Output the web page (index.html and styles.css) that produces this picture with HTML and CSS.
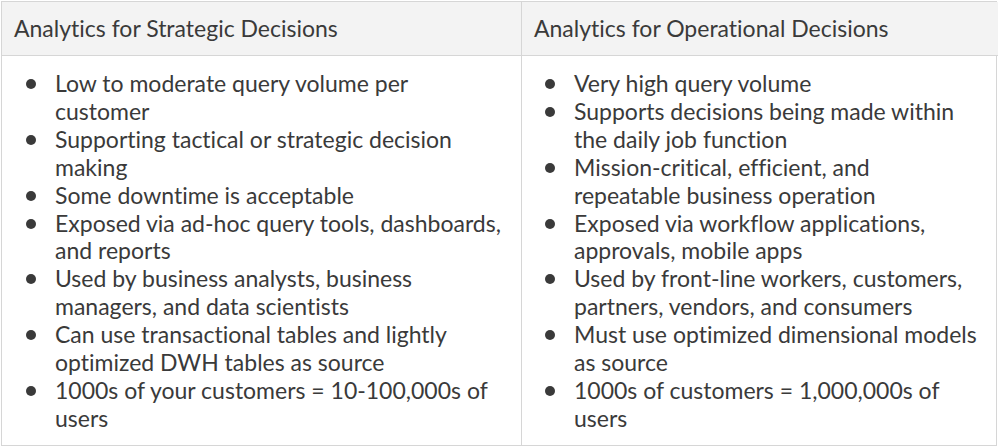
FILE: index.html
```html
<!DOCTYPE html>
<html>
<head>
<meta charset="utf-8">
<link rel="stylesheet" href="styles.css">
</head>
<body>
<div class="table">
  <div class="head">Analytics for Strategic Decisions</div>
  <div class="head right">Analytics for Operational Decisions</div>
  <div class="cell">
    <ul class="list">
      <li>Low to moderate query volume per customer</li>
      <li>Supporting tactical or strategic decision making</li>
      <li>Some downtime is acceptable</li>
      <li>Exposed via ad-hoc query tools, dashboards, and reports</li>
      <li>Used by business analysts, business managers, and data scientists</li>
      <li>Can use transactional tables and lightly optimized DWH tables as source</li>
      <li>1000s of your customers = 10-100,000s of users</li>
    </ul>
  </div>
  <div class="cell right">
    <ul class="list">
      <li>Very high query volume</li>
      <li>Supports decisions being made within the daily job function</li>
      <li>Mission-critical, efficient, and repeatable business operation</li>
      <li>Exposed via workflow applications, approvals, mobile apps</li>
      <li>Used by front-line workers, customers, partners, vendors, and consumers</li>
      <li>Must use optimized dimensional models as source</li>
      <li>1000s of customers = 1,000,000s of users</li>
    </ul>
  </div>
</div>
</body>
</html>
```

FILE: styles.css
```css
html, body {
  margin: 0;
  padding: 0;
  background: #ffffff;
}
body {
  padding: 1px 0 0 1px;
  font-family: Lato, "Open Sans", sans-serif;
  font-variant-ligatures: none;
  color: #3a3a3a;
}
.table {
  display: grid;
  grid-template-columns: 519px 477px;
  width: 996px;
  border: 1px solid #d6d6d6;
  box-sizing: border-box;
  height: 445px;
  grid-template-rows: 54px 1fr;
}
.head {
  background: #f3f3f3;
  border-bottom: 1px solid #d6d6d6;
  font-size: 23px;
  line-height: 28px;
  padding: 12px 12px 0 12px;
  box-sizing: border-box;
}
.right {
  border-left: 1px solid #d6d6d6;
}
.cell {
  padding: 14px 16px 0 0;
  box-sizing: border-box;
}
.cell.right {
  padding-right: 16px;
}
.list {
  list-style: none;
  margin: 0;
  padding: 0;
}
.list li {
  display: flex;
  align-items: flex-start;
  font-size: 23px;
  line-height: 27.9px;
}
.list li::before {
  content: "";
  flex: none;
  width: 10px;
  height: 10px;
  border-radius: 50%;
  background: #3a3a3a;
  margin: 9px 19px 0 24px;
}
.cell.right .list li::before {
  margin-left: 23px;
}
```
